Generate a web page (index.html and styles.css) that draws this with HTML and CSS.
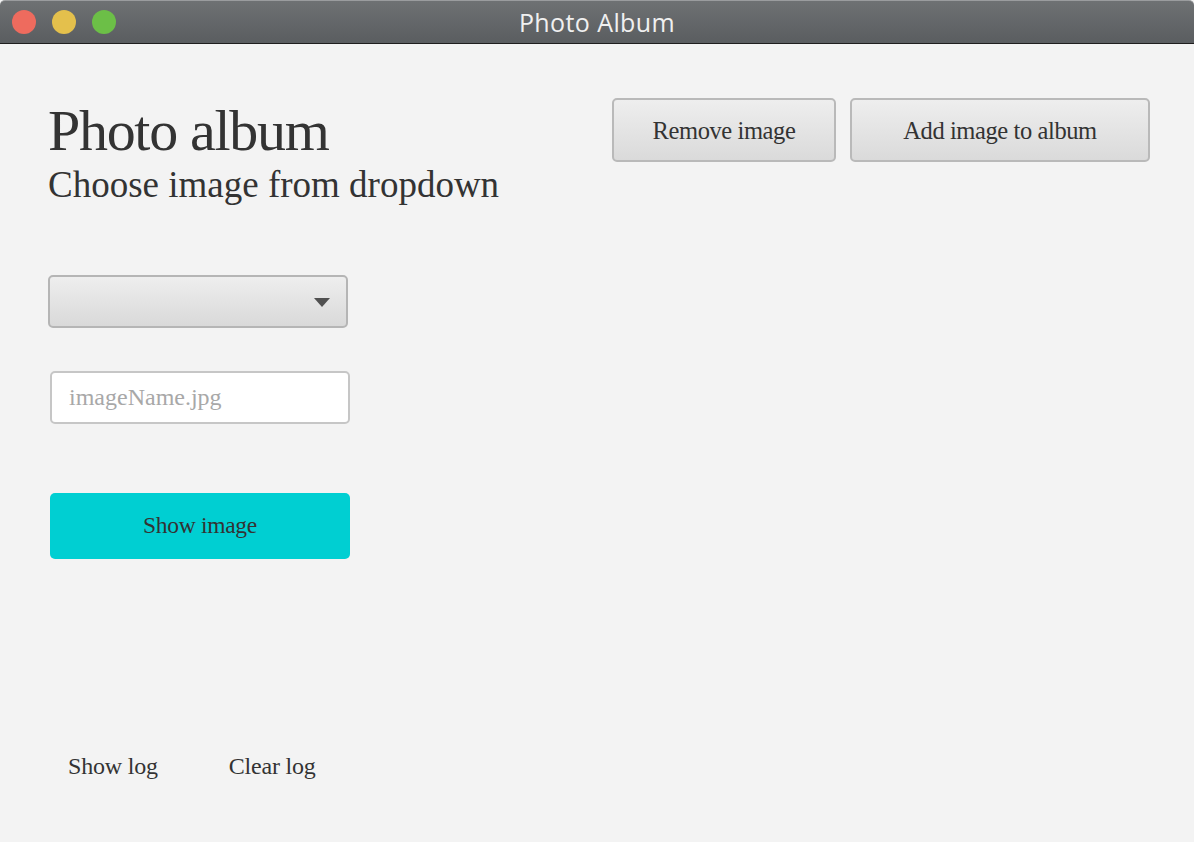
FILE: index.html
```html
<!DOCTYPE html>
<html>
<head>
<meta charset="utf-8">
<title>Photo Album</title>
<link rel="stylesheet" href="styles.css">
</head>
<body>
<div class="window">
  <div class="titlebar">
    <div class="lights">
      <span class="light red"></span>
      <span class="light yellow"></span>
      <span class="light green"></span>
    </div>
    <div class="wintitle">Photo Album</div>
  </div>
  <div class="content">
    <div class="header">
      <div class="heading">
        <h1 class="title">Photo album</h1>
        <h2 class="subtitle">Choose image from dropdown</h2>
      </div>
      <div class="actions">
        <button class="btn remove">Remove image</button>
        <button class="btn add">Add image to album</button>
      </div>
    </div>
    <div class="form">
      <div class="select">
        <svg class="arrow" width="16" height="9" viewBox="0 0 16 9"><path d="M0 0 H16 L8 9 Z" fill="#505050"/></svg>
      </div>
      <input class="field" type="text" placeholder="imageName.jpg">
      <button class="show">Show image</button>
    </div>
    <div class="logs">
      <span class="link">Show log</span>
      <span class="link">Clear log</span>
    </div>
  </div>
</div>
</body>
</html>
```

FILE: styles.css
```css
html, body {
  margin: 0;
  padding: 0;
  background: #f3f3f3;
}
.window {
  width: 1194px;
  height: 842px;
  display: flex;
  flex-direction: column;
  background: #f3f3f3;
  font-family: "Liberation Serif", "Times New Roman", serif;
  color: #333333;
}
.titlebar {
  height: 42px;
  border-top: 1px solid #9a9c9e;
  border-bottom: 1px solid #1e1e1e;
  border-radius: 5px 5px 0 0;
  background: linear-gradient(#6e7173, #5a5d60);
  position: relative;
  display: flex;
  align-items: center;
  justify-content: center;
}
.lights {
  position: absolute;
  left: 12px;
  top: 9px;
  display: flex;
  gap: 16px;
}
.light {
  width: 24px;
  height: 24px;
  border-radius: 50%;
  display: block;
}
.red { background: #ee6b5e; }
.yellow { background: #e4c04c; }
.green { background: #6cbf47; }
.wintitle {
  font-family: "Open Sans", "Liberation Sans", sans-serif;
  font-size: 25px;
  color: #f0f0f0;
  letter-spacing: 0.4px;
}
.content {
  flex: 1;
  display: flex;
  flex-direction: column;
  padding: 54px 44px 0 48px;
}
.header {
  display: flex;
  justify-content: space-between;
  align-items: flex-start;
}
.heading {
  display: flex;
  flex-direction: column;
}
.title {
  margin: 4px 0 0 0;
  font-weight: normal;
  font-size: 58px;
  line-height: 58px;
  letter-spacing: -1.3px;
}
.subtitle {
  margin: 6px 0 0 0;
  font-weight: normal;
  font-size: 37px;
  line-height: 37px;
}
.actions {
  display: flex;
  gap: 14px;
}
.btn {
  height: 64px;
  border: 2px solid #b9b9b9;
  border-radius: 5px;
  background: linear-gradient(#eeeeee, #dadada);
  font-family: "Liberation Serif", "Times New Roman", serif;
  font-size: 24.5px;
  color: #333333;
  padding: 2px 0 0 0;
  letter-spacing: -0.4px;
}
.remove { width: 224px; }
.add { width: 300px; }
.form {
  display: flex;
  flex-direction: column;
  margin-top: 72px;
}
.select {
  width: 300px;
  height: 53px;
  box-sizing: border-box;
  border: 2px solid #b5b5b5;
  border-radius: 5px;
  background: linear-gradient(#eeeeee, #d9d9d9);
  display: flex;
  align-items: center;
  justify-content: flex-end;
  padding-right: 16px;
}
.arrow { display: block; margin-top: 2px; }
.field {
  margin: 43px 0 0 2px;
  width: 300px;
  height: 53px;
  box-sizing: border-box;
  border: 2px solid #c6c6c6;
  border-radius: 5px;
  background: #ffffff;
  padding: 0 0 0 17px;
  font-family: "Liberation Serif", "Times New Roman", serif;
  font-size: 24px;
  color: #333;
  outline: none;
}
.field::placeholder { color: #a8a8a8; }
.show {
  margin: 69px 0 0 2px;
  width: 300px;
  height: 66px;
  border: none;
  border-radius: 5px;
  background: #00cfd2;
  font-family: "Liberation Serif", "Times New Roman", serif;
  font-size: 23.5px;
  color: #333333;
  padding: 0 0 2px 0;
  letter-spacing: -0.3px;
}
.logs {
  margin-top: 192px;
  display: flex;
  gap: 71px;
  padding-left: 20px;
}
.link {
  font-size: 24px;
  line-height: 30px;
  letter-spacing: -0.2px;
}
```
